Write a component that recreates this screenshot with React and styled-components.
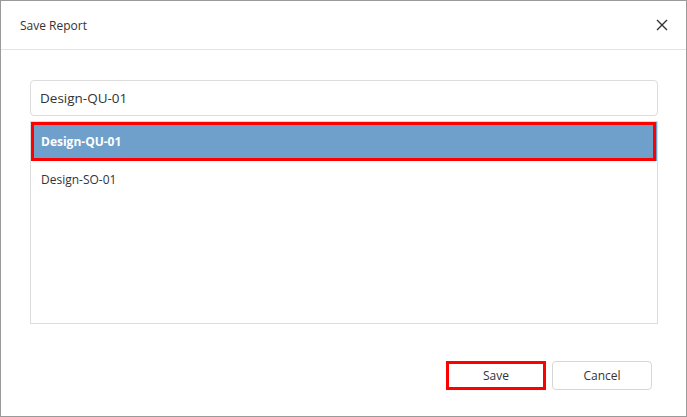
import React, { useState } from 'react';
import styled, { createGlobalStyle } from 'styled-components';

const GlobalStyle = createGlobalStyle`
  html, body { margin: 0; padding: 0; background: #fff; }
  body { font-family: "Open Sans", "Liberation Sans", sans-serif; }
  * { box-sizing: border-box; }
`;

const Dialog = styled.div`
  width: 687px;
  height: 417px;
  border: 1px solid #9a9a9a;
  background: #fff;
  display: flex;
  flex-direction: column;
`;

const Header = styled.div`
  height: 49px;
  border-bottom: 1px solid #e3e3e3;
  display: flex;
  align-items: center;
  justify-content: space-between;
  padding: 0 16px 0 19px;
`;

const Title = styled.div`
  font-size: 12px;
  color: #333;
`;

const CloseButton = styled.button`
  border: none;
  background: none;
  padding: 0;
  width: 16px;
  height: 16px;
  display: flex;
  align-items: center;
  justify-content: center;
  cursor: pointer;
`;

const Body = styled.div`
  padding: 30px 28px 0 29px;
  display: flex;
  flex-direction: column;
  gap: 5px;
`;

const NameInput = styled.input`
  height: 36px;
  border: 1px solid #dcdcdc;
  border-radius: 4px;
  padding: 0 9px;
  font-family: "Open Sans", "Liberation Sans", sans-serif;
  font-size: 13.5px;
  color: #333;
  outline: none;
`;

const List = styled.div`
  height: 203px;
  border: 1px solid #dcdcdc;
  display: flex;
  flex-direction: column;
`;

const Row = styled.div`
  height: ${p => (p.$selected ? '39px' : '36px')};
  display: flex;
  align-items: center;
  padding-left: ${p => (p.$selected ? '7px' : '10px')};
  font-size: 12px;
  font-weight: ${p => (p.$selected ? 700 : 400)};
  color: ${p => (p.$selected ? '#fff' : '#333')};
  background: ${p => (p.$selected ? '#6fa0cc' : 'transparent')};
  border: ${p => (p.$selected ? '3px solid #ff0000' : 'none')};
  margin-right: ${p => (p.$selected ? '1px' : '0')};
  cursor: pointer;
`;

const RowWrap = styled.div`
  background: ${p => (p.$selected ? '#6fa0cc' : 'transparent')};
`;

const Footer = styled.div`
  margin-top: auto;
  display: flex;
  justify-content: flex-end;
  gap: 6px;
  padding: 0 34px 26px 0;
`;

const Button = styled.button`
  width: 100px;
  height: 29px;
  font-family: "Open Sans", "Liberation Sans", sans-serif;
  font-size: 12px;
  color: #333;
  background: #fff;
  border: ${p => (p.$highlight ? '3px solid #ff0000' : '1px solid #d6d6d6')};
  border-radius: ${p => (p.$highlight ? '0' : '4px')};
  cursor: pointer;
`;

const reports = ['Design-QU-01', 'Design-SO-01'];

export default function App() {
  const [name, setName] = useState('Design-QU-01');
  const [selected, setSelected] = useState(0);

  return (
    <>
      <GlobalStyle />
      <Dialog>
        <Header>
          <Title>Save Report</Title>
          <CloseButton aria-label="Close">
            <svg width="12" height="12" viewBox="0 0 12 12">
              <path d="M1 1L11 11M11 1L1 11" stroke="#333" strokeWidth="1.4" />
            </svg>
          </CloseButton>
        </Header>
        <Body>
          <NameInput value={name} onChange={e => setName(e.target.value)} />
          <List>
            {reports.map((r, i) => (
              <RowWrap key={r} $selected={i === selected}>
                <Row $selected={i === selected} onClick={() => { setSelected(i); setName(r); }}>
                  {r}
                </Row>
              </RowWrap>
            ))}
          </List>
        </Body>
        <Footer>
          <Button $highlight>Save</Button>
          <Button>Cancel</Button>
        </Footer>
      </Dialog>
    </>
  );
}
